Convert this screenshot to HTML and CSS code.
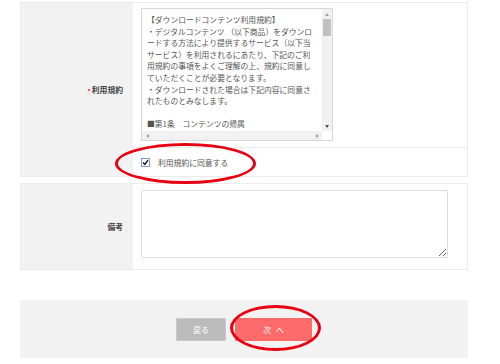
FILE: index.html
```html
<!DOCTYPE html>
<html lang="ja">
<head>
  <meta charset="UTF-8" />
  <meta name="viewport" content="width=device-width, initial-scale=1" />
  <title>利用規約</title>

  <link rel="stylesheet" href="styles.css">
</head>
<body>

  <div class="page">
    <div class="form">

      <div class="row row-terms">
        <div class="label"><span class="req"></span>利用規約</div>
        <div class="field">
          <div class="terms-cell">
            <div class="terms-box">
              <div class="terms-text">【ダウンロードコンテンツ利用規約】
・デジタルコンテンツ （以下商品）をダウンロ
ードする方法により提供するサービス（以下当
サービス）を利用されるにあたり、下記のご利
用規約の事項をよくご理解の上、規約に同意し
ていただくことが必要となります。
・ダウンロードされた場合は下記内容に同意さ
れたものとみなします。

■第1条　コンテンツの帰属</div>
              <div class="vbar">
                <span class="arrow arrow-up"></span>
                <span class="thumb"></span>
                <span class="track"></span>
                <span class="arrow arrow-down"></span>
              </div>
              <div class="hbar">
                <span class="arrow arrow-left"></span>
                <span class="track"></span>
                <span class="arrow arrow-right"></span>
              </div>
              <div class="corner"></div>
            </div>
          </div>
          <label class="agree">
            <span class="check">
              <svg width="7" height="7" viewBox="0 0 7 7"><path d="M1 3.6 L2.8 5.4 L6 1.2" fill="none" stroke="#111" stroke-width="1.4"/></svg>
            </span>
            利用規約に同意する
          </label>
        </div>
      </div>

      <div class="row row-note">
        <div class="label">備考</div>
        <div class="field note-field">
          <textarea class="note-input"></textarea>
        </div>
      </div>

    </div>

    <div class="actions">
      <button class="btn btn-back">戻る</button>
      <button class="btn btn-next">次<span class="gap"></span>へ</button>
    </div>

    <!-- red annotation rings -->
    <div class="ring ring-agree"></div>
    <div class="ring ring-next"></div>
  </div>

</body>
</html>
```

FILE: styles.css
```css
/* Page */
body {
  margin: 0;
  background: #fff;
  font-family: "Noto Sans CJK JP", "Noto Sans", sans-serif;
  color: #555;
}

.page {
  position: relative;
  width: 500px;
  height: 364px;
  padding: 2px 32px 0 20px;
  box-sizing: border-box;
}

/* Form rows */
.row {
  display: flex;
  border: 1px solid #ebebeb;
}
.row-terms {
  height: 175px;
  box-sizing: border-box;
}
.row-note {
  margin-top: 6px;
  height: 87px;
  box-sizing: border-box;
}

.label {
  width: 112px;
  flex: none;
  background: #f2f2f2;
  display: flex;
  align-items: center;
  justify-content: flex-end;
  padding-right: 10px;
  box-sizing: border-box;
  font-size: 7.8px;
  font-weight: bold;
  color: #444;
}
.req {
  width: 2px;
  height: 2px;
  background: #ff5a5a;
  margin-right: 2px;
}

.field {
  flex: 1;
  display: flex;
  flex-direction: column;
}

/* Terms box */
.terms-cell {
  padding: 5px 0 6px 8px;
  border-bottom: 1px solid #ebebeb;
}
.terms-box {
  width: 192px;
  height: 133px;
  box-sizing: border-box;
  border: 1px solid #d8d8d8;
  display: grid;
  grid-template-columns: 1fr 10px;
  grid-template-rows: 1fr 9px;
}
.terms-text {
  overflow: hidden;
  white-space: pre;
  padding: 5px 0 0 5px;
  font-size: 7.8px;
  line-height: 11.6px;
  color: #555;
}

/* Scrollbars */
.vbar {
  background: #f1f1f1;
  display: flex;
  flex-direction: column;
}
.hbar {
  background: #f1f1f1;
  display: flex;
}
.corner {
  background: #fff;
}
.track {
  flex: 1;
}
.thumb {
  height: 17px;
  margin: 0 1px;
  background: #c1c1c1;
}
.arrow {
  flex: none;
  width: 10px;
  height: 10px;
  display: flex;
  align-items: center;
  justify-content: center;
}
.hbar .arrow {
  height: 9px;
}
.arrow::before {
  content: "";
  border: 2px solid transparent;
}
.arrow-up::before { border-bottom: 3px solid #a3a3a3; border-top: 0; }
.arrow-down::before { border-top: 3px solid #505050; border-bottom: 0; }
.arrow-left::before { border-right: 3px solid #a3a3a3; border-left: 0; }
.arrow-right::before { border-left: 3px solid #a3a3a3; border-right: 0; }

/* Agree checkbox */
.agree {
  flex: 1;
  display: flex;
  align-items: center;
  padding-left: 8px;
  font-size: 7.8px;
  color: #555;
}
.check {
  width: 9px;
  height: 9px;
  box-sizing: border-box;
  border: 1px solid #7f9fd8;
  background: #fff;
  display: flex;
  align-items: center;
  justify-content: center;
  margin-right: 8px;
}

/* Note textarea */
.note-field {
  padding: 6px 0 0 8px;
}
.note-input {
  width: 307px;
  height: 68px;
  box-sizing: border-box;
  border: 1px solid #dddddd;
  border-radius: 2px;
  resize: vertical;
  margin: 0;
  font-family: inherit;
}

/* Buttons */
.actions {
  margin-top: 30px;
  height: 58px;
  background: #f2f2f2;
  display: flex;
  justify-content: center;
  gap: 9px;
  padding-top: 18px;
  box-sizing: border-box;
}
.btn {
  height: 23px;
  border: none;
  border-radius: 1px;
  color: #fff;
  font-family: inherit;
  font-size: 7.8px;
  padding: 0;
}
.btn-back {
  width: 50px;
  background: #bbbbbb;
  border: 1px solid #c9c9c9;
}
.btn-next {
  width: 77px;
  background: #ff6b6b;
}
.gap {
  display: inline-block;
  width: 5px;
}

/* Annotation rings */
.ring {
  position: absolute;
  border: 3px solid #e60012;
  border-radius: 50%;
  box-sizing: border-box;
}
.ring-agree {
  left: 115px;
  top: 143px;
  width: 141px;
  height: 41px;
}
.ring-next {
  left: 230px;
  top: 305px;
  width: 91px;
  height: 46px;
}
```
